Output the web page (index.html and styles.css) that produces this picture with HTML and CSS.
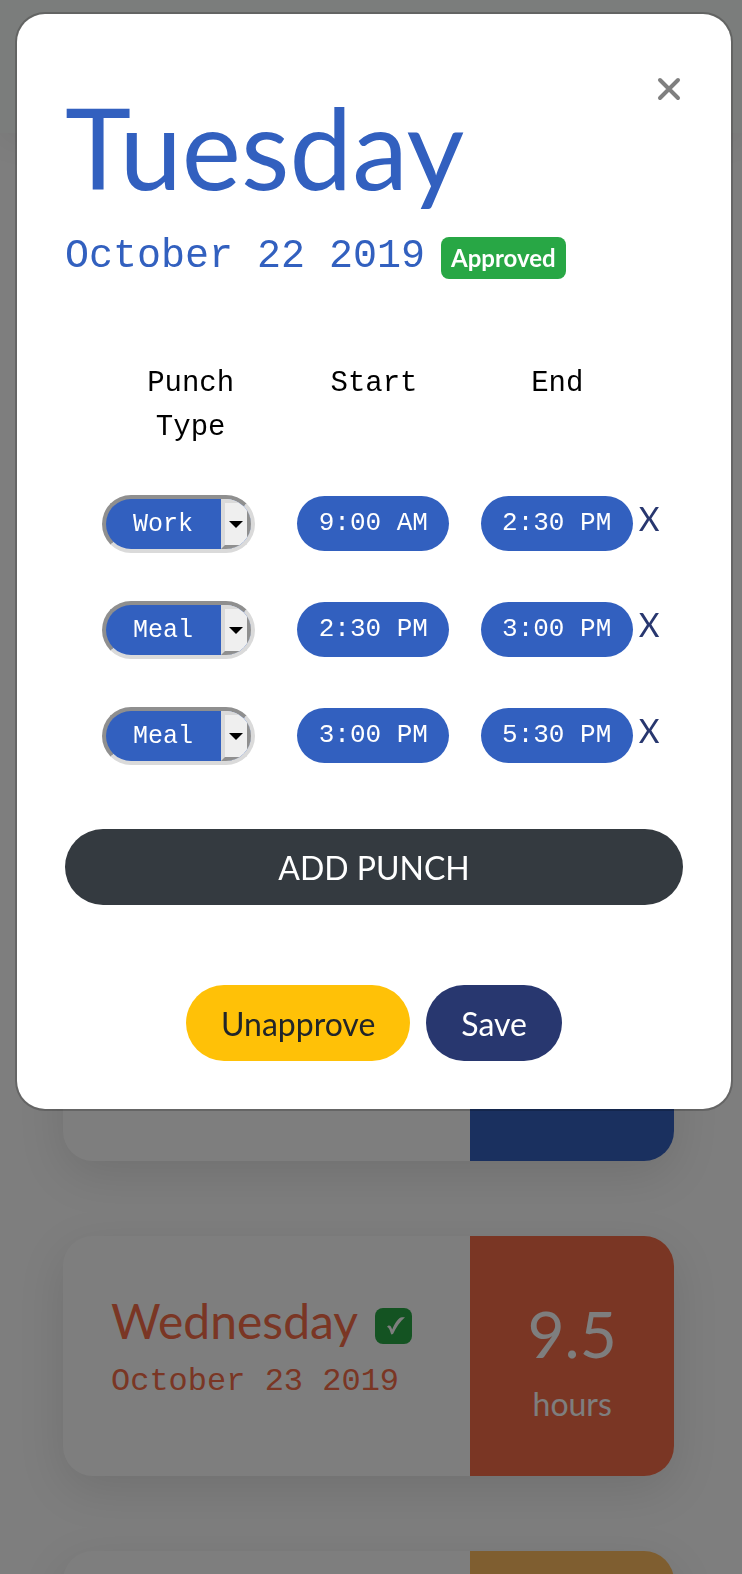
FILE: index.html
```html
<!DOCTYPE html>
<html lang="en">
<head>
<meta charset="utf-8">
<title>Timesheet</title>
<link rel="stylesheet" href="styles.css">
</head>
<body>
<header class="topbar"></header>
<main class="days">
  <article class="day"><div class="day-info"></div><div class="day-hours blue"></div></article>
  <article class="day"><div class="day-info"></div><div class="day-hours blue"></div></article>
  <article class="day"><div class="day-info"></div><div class="day-hours blue"></div></article>
  <article class="day">
    <div class="day-info">
      <div class="day-title">
        <h2 class="day-name">Wednesday</h2>
        <span class="tick"><svg width="18" height="18" viewBox="0 0 18 18"><path d="M0 10 C0.500 8.500 2.500 8 3.500 9 C4.300 10 4.800 11.500 5.200 12.500 C8 6 11.500 0.500 15 0.300 L18 0.300 C13 4.500 9 10.500 6 17 L4.300 17.500 C3 14 2.500 10.500 0 10Z" fill="#fdfdfd"/></svg></span>
      </div>
      <p class="day-date">October 23 2019</p>
    </div>
    <div class="day-hours orange">
      <span class="count">9.5</span>
      <span class="unit">hours</span>
    </div>
  </article>
  <article class="day"><div class="day-info"></div><div class="day-hours yellow"></div></article>
</main>

<div class="backdrop">
  <section class="dialog" role="dialog" aria-labelledby="dialog-title">
    <header class="dialog-head">
      <h1 class="dialog-title" id="dialog-title">Tuesday</h1>
      <button class="close" type="button" aria-label="Close"><svg width="24" height="24" viewBox="0 0 24 24"><path d="M3 3 L21 21 M21 3 L3 21" stroke="#7f7f7f" stroke-width="4" stroke-linecap="round"/></svg></button>
    </header>
    <div class="dialog-date">
      <span>October 22 2019</span>
      <span class="badge">Approved</span>
    </div>
    <div class="punches">
      <table class="punch-table">
        <thead><tr><th>Punch Type</th><th>Start</th><th>End</th></tr></thead>
        <tbody>
          <tr>
            <td><div class="type"><select aria-label="Punch type 1"><option>Work</option></select><span class="arrow"></span></div></td>
            <td><input class="time" type="text" value="9:00 AM" aria-label="Start 1"></td>
            <td><div class="end"><input class="time" type="text" value="2:30 PM" aria-label="End 1"><button class="remove" type="button">X</button></div></td>
          </tr>
          <tr>
            <td><div class="type"><select aria-label="Punch type 2"><option>Meal</option></select><span class="arrow"></span></div></td>
            <td><input class="time" type="text" value="2:30 PM" aria-label="Start 2"></td>
            <td><div class="end"><input class="time" type="text" value="3:00 PM" aria-label="End 2"><button class="remove" type="button">X</button></div></td>
          </tr>
          <tr>
            <td><div class="type"><select aria-label="Punch type 3"><option>Meal</option></select><span class="arrow"></span></div></td>
            <td><input class="time" type="text" value="3:00 PM" aria-label="Start 3"></td>
            <td><div class="end"><input class="time" type="text" value="5:30 PM" aria-label="End 3"><button class="remove" type="button">X</button></div></td>
          </tr>
        </tbody>
      </table>
    </div>
    <button class="btn add" type="button">ADD PUNCH</button>
    <div class="actions">
      <button class="btn unapprove" type="button">Unapprove</button>
      <button class="btn save" type="button">Save</button>
    </div>
  </section>
</div>
</body>
</html>
```
FILE: styles.css
```css
* { box-sizing: border-box; }

body {
  margin: 0;
  height: 100vh;
  overflow: hidden;
  background: #fcfcfc;
  font-family: Lato, sans-serif;
  font-size: 32px;
}

h1, h2, p { margin: 0; font-weight: 400; }

button {
  border: 0;
  padding: 0;
  background: none;
  font: inherit;
  cursor: pointer;
}

/* Day list */
.topbar {
  height: 133px;
  background: #f7fbf8;
  box-shadow: 0 8px 32px rgba(0, 0, 0, .06);
}

.days {
  display: flex;
  flex-direction: column;
  gap: 75px;
  padding: 158px 68px 75px 63px;
}

.day {
  display: grid;
  grid-template-columns: 2fr 1fr;
  min-height: 240px;
  border-radius: 30px;
  overflow: hidden;
  background: #fdfdfd;
  box-shadow: 0 14px 48px rgba(0, 0, 0, .11);
}

.day-info {
  padding: 56px 48px;
  color: #f46c48;
}

.day-title {
  display: flex;
  align-items: center;
  gap: 17px;
}

.day-name { font-size: 48px; line-height: 58px; }

.tick {
  display: flex;
  align-items: center;
  justify-content: center;
  width: 37px;
  height: 36px;
  margin-top: 10px;
  padding-left: 4px;
  border-radius: 8px;
  background: #28a745;
}

.day-date {
  margin-top: 8px;
  font: 32px/48px "Liberation Mono", monospace;
}

.day-hours {
  display: flex;
  flex-direction: column;
  align-items: center;
  gap: 8px;
  padding-top: 60px;
  color: #fdfdfd;
}

.blue { background: #3460be; }
.orange { background: #f46c48; }
.yellow { background: #ffbc60; }

.count { font-size: 64px; line-height: 76px; }
.unit { line-height: 48px; }

/* Dialog */
.backdrop {
  position: fixed;
  inset: 0;
  overflow: hidden;
  padding: 12px 9px 0 15px;
  background: rgba(0, 0, 0, .5);
}

.dialog {
  border: 2px solid rgba(0, 0, 0, .2);
  border-radius: 30px;
  padding: 63px 48px 48px;
  background: #fff;
  background-clip: padding-box;
}

.dialog-head {
  display: flex;
  align-items: flex-start;
  justify-content: space-between;
  color: #3260bf;
}

.dialog-title {
  padding-top: 2px;
  font-size: 112px;
  line-height: 136px;
}

.close { display: flex; margin-right: 2px; }

.dialog-date {
  display: flex;
  align-items: baseline;
  gap: 16px;
  margin-top: 18px;
  color: #3260bf;
  font: 40px/48px "Liberation Mono", monospace;
}

.badge {
  padding: 9px 10px;
  border-radius: 8px;
  background: #28a745;
  color: #fff;
  font: 700 24px/24px Lato, sans-serif;
}

.punches { padding: 81px 34px 0; }

.punch-table {
  width: 100%;
  table-layout: fixed;
  border-collapse: collapse;
}

.punch-table th {
  padding: 0 32px 20px;
  vertical-align: top;
  color: #000;
  font: 29px/44px "Liberation Mono", monospace;
}

.punch-table td {
  height: 106px;
  padding: 0 0 0 15px;
  vertical-align: middle;
}

.punch-table td:first-child { padding-left: 3px; }

.type {
  position: relative;
  width: 153px;
  height: 58px;
  margin-top: 2px;
  overflow: hidden;
  border: 4px solid;
  border-color: #8f8f8f #dadada #dadada #8f8f8f;
  border-radius: 29px;
  background: #3260bf;
}

.type select {
  appearance: none;
  display: block;
  width: 100%;
  height: 100%;
  border: 0;
  padding: 0 34px 0 27px;
  background: none;
  color: #fff;
  font: 25px "Liberation Mono", monospace;
}

.arrow {
  position: absolute;
  inset: 0 0 0 auto;
  display: flex;
  align-items: center;
  justify-content: center;
  width: 30px;
  border: 4px solid;
  border-color: #dadada #8f8f8f #8f8f8f #dadada;
  background: #efefef;
  pointer-events: none;
}

.arrow::before {
  content: "";
  border: 7px solid transparent;
  border-top-color: #000;
  border-bottom: 0;
}

.time {
  display: block;
  width: 152px;
  height: 55px;
  border: 0;
  border-radius: 28px;
  padding: 0;
  background: #3260bf;
  color: #fff;
  text-align: center;
  font: 26px "Liberation Mono", monospace;
}

.end {
  display: flex;
  align-items: center;
  gap: 6px;
}

.end .time { flex: none; }

.remove {
  height: 44px;
  margin-bottom: 10px;
  color: #28376f;
}

.btn {
  height: 76px;
  border-radius: 38px;
  padding: 0 35px;
}

.add {
  display: block;
  width: 100%;
  margin-top: 41px;
  background: #343a40;
  color: #fff;
}

.actions {
  display: flex;
  justify-content: center;
  gap: 16px;
  margin-top: 80px;
}

.unapprove { background: #ffc107; color: #212529; }
.save { background: #28376f; color: #fff; }
```
